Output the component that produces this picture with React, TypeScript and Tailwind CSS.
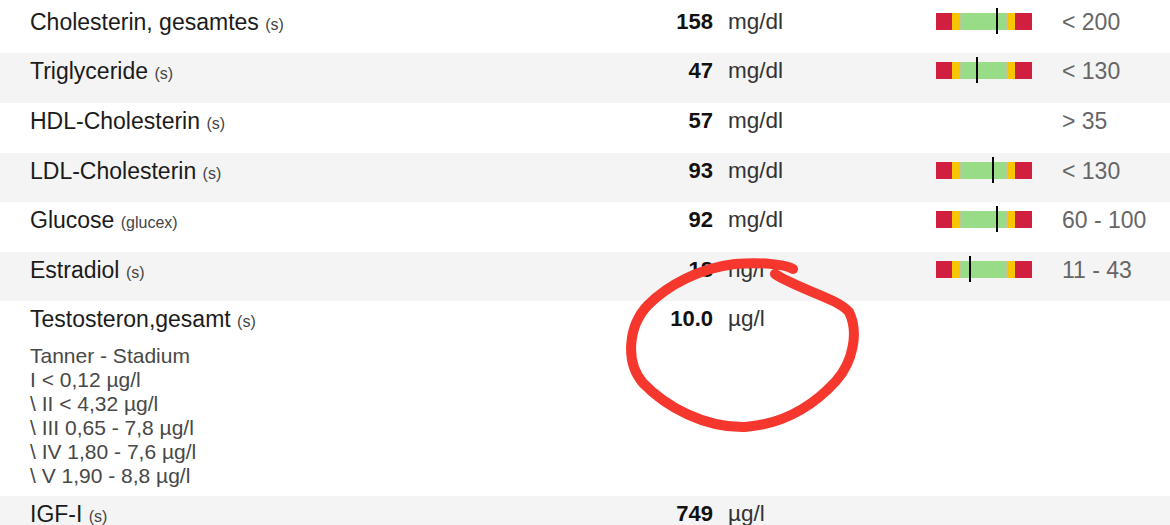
import React from 'react';

type Lab = {
    name: string;
    src: string;
    value: string;
    unit: string;
    marker?: number;
    range: string;
    h: string;
    gray?: boolean;
};

const labs: Lab[] = [
    { name: 'Cholesterin, gesamtes', src: '(s)', value: '158', unit: 'mg/dl', marker: 60, range: '< 200', h: 'h-[49px]' },
    { name: 'Triglyceride', src: '(s)', value: '47', unit: 'mg/dl', marker: 40, range: '< 130', h: 'h-[50px]', gray: true },
    { name: 'HDL-Cholesterin', src: '(s)', value: '57', unit: 'mg/dl', range: '> 35', h: 'h-[50px]' },
    { name: 'LDL-Cholesterin', src: '(s)', value: '93', unit: 'mg/dl', marker: 56, range: '< 130', h: 'h-[49px]', gray: true },
    { name: 'Glucose', src: '(glucex)', value: '92', unit: 'mg/dl', marker: 60, range: '60 - 100', h: 'h-[50px]' },
    { name: 'Estradiol', src: '(s)', value: '18', unit: 'ng/l', marker: 33, range: '11 - 43', h: 'h-[49px]', gray: true },
];

const tanner = [
    'Tanner - Stadium',
    'I < 0,12 µg/l',
    '\\ II < 4,32 µg/l',
    '\\ III 0,65 - 7,8 µg/l',
    '\\ IV 1,80 - 7,6 µg/l',
    '\\ V 1,90 - 8,8 µg/l',
];

const RangeBar = ({ marker }: { marker: number }) => {
    return (
        <div className="relative -mt-[1px] flex h-[26px] w-[96px] items-center">
            <div className="flex h-[17px] w-[96px]">
                <div className="w-[16px] bg-[#d1203f]"></div>
                <div className="w-[7px] bg-[#f7c600]"></div>
                <div className="w-[2px] bg-[#b9c79f]"></div>
                <div className="w-[45px] bg-[#98dc88]"></div>
                <div className="w-[2px] bg-[#b9c79f]"></div>
                <div className="w-[7px] bg-[#f7c600]"></div>
                <div className="w-[17px] bg-[#d1203f]"></div>
            </div>
            <div className="absolute top-0 h-[26px] w-[2px] bg-black" style={{ left: marker }}></div>
        </div>
    );
};

const Row = ({ lab }: { lab: Lab }) => {
    return (
        <div className={`flex items-start pl-[30px] pt-[5px] ${lab.h} ${lab.gray ? 'bg-[#f4f4f4]' : 'bg-white'}`}>
            <div className="w-[560px] text-[23px] text-[#1b1b1b]">
                {lab.name} <span className="text-[16px] text-[#444]">{lab.src}</span>
            </div>
            <div className="w-[123px] text-right font-bold text-[#111]">{lab.value}</div>
            <div className="w-[223px] pl-[15px] text-[22.5px] text-[#333]">{lab.unit}</div>
            <div className="w-[126px]">{lab.marker !== undefined && <RangeBar marker={lab.marker} />}</div>
            <div className="text-[23px] text-[#666]">{lab.range}</div>
        </div>
    );
};

export default function App() {
    return (
        <div className="relative h-[525px] w-[1170px] overflow-hidden bg-white pt-[4px] font-['Liberation_Sans',Arial,sans-serif] text-[22px] leading-[26px]">
            {labs.map((lab) => (
                <Row key={lab.name} lab={lab} />
            ))}

            <div className="flex h-[195px] items-start bg-white pl-[30px] pt-[5px]">
                <div className="w-[560px]">
                    <p className="text-[23px] text-[#1b1b1b]">
                        Testosteron,gesamt <span className="text-[16px] text-[#444]">(s)</span>
                    </p>
                    <ul className="mt-[9px] text-[21px] leading-[24px] text-[#484848]">
                        {tanner.map((t) => (
                            <li key={t}>{t}</li>
                        ))}
                    </ul>
                </div>
                <div className="w-[123px] text-right font-bold text-[#111]">10.0</div>
                <div className="w-[223px] pl-[15px] text-[22.5px] text-[#333]">µg/l</div>
            </div>

            <div className="flex h-[60px] items-start bg-[#f4f4f4] pl-[30px] pt-[5px]">
                <div className="w-[560px] text-[23px] text-[#1b1b1b]">
                    IGF-I <span className="text-[16px] text-[#444]">(s)</span>
                </div>
                <div className="w-[123px] text-right font-bold text-[#111]">749</div>
                <div className="w-[223px] pl-[15px] text-[22.5px] text-[#333]">µg/l</div>
            </div>

            {/* red hand drawn circle */}
            <svg className="pointer-events-none absolute left-0 top-0" width="1170" height="525" viewBox="0 0 1170 525">
                <path
                    d="M 775 274 C 800 290, 837 298, 849 312 C 859 332, 853 362, 836 381 C 815 404, 785 424, 745 427 C 705 428, 666 407, 643 383 C 625 362, 628 326, 648 305 C 668 285, 700 268, 735 264 C 760 262, 785 264, 793 269"
                    fill="none"
                    stroke="#f5372e"
                    strokeWidth="10"
                    strokeLinecap="round"
                    strokeLinejoin="round"
                />
            </svg>
        </div>
    );
}
